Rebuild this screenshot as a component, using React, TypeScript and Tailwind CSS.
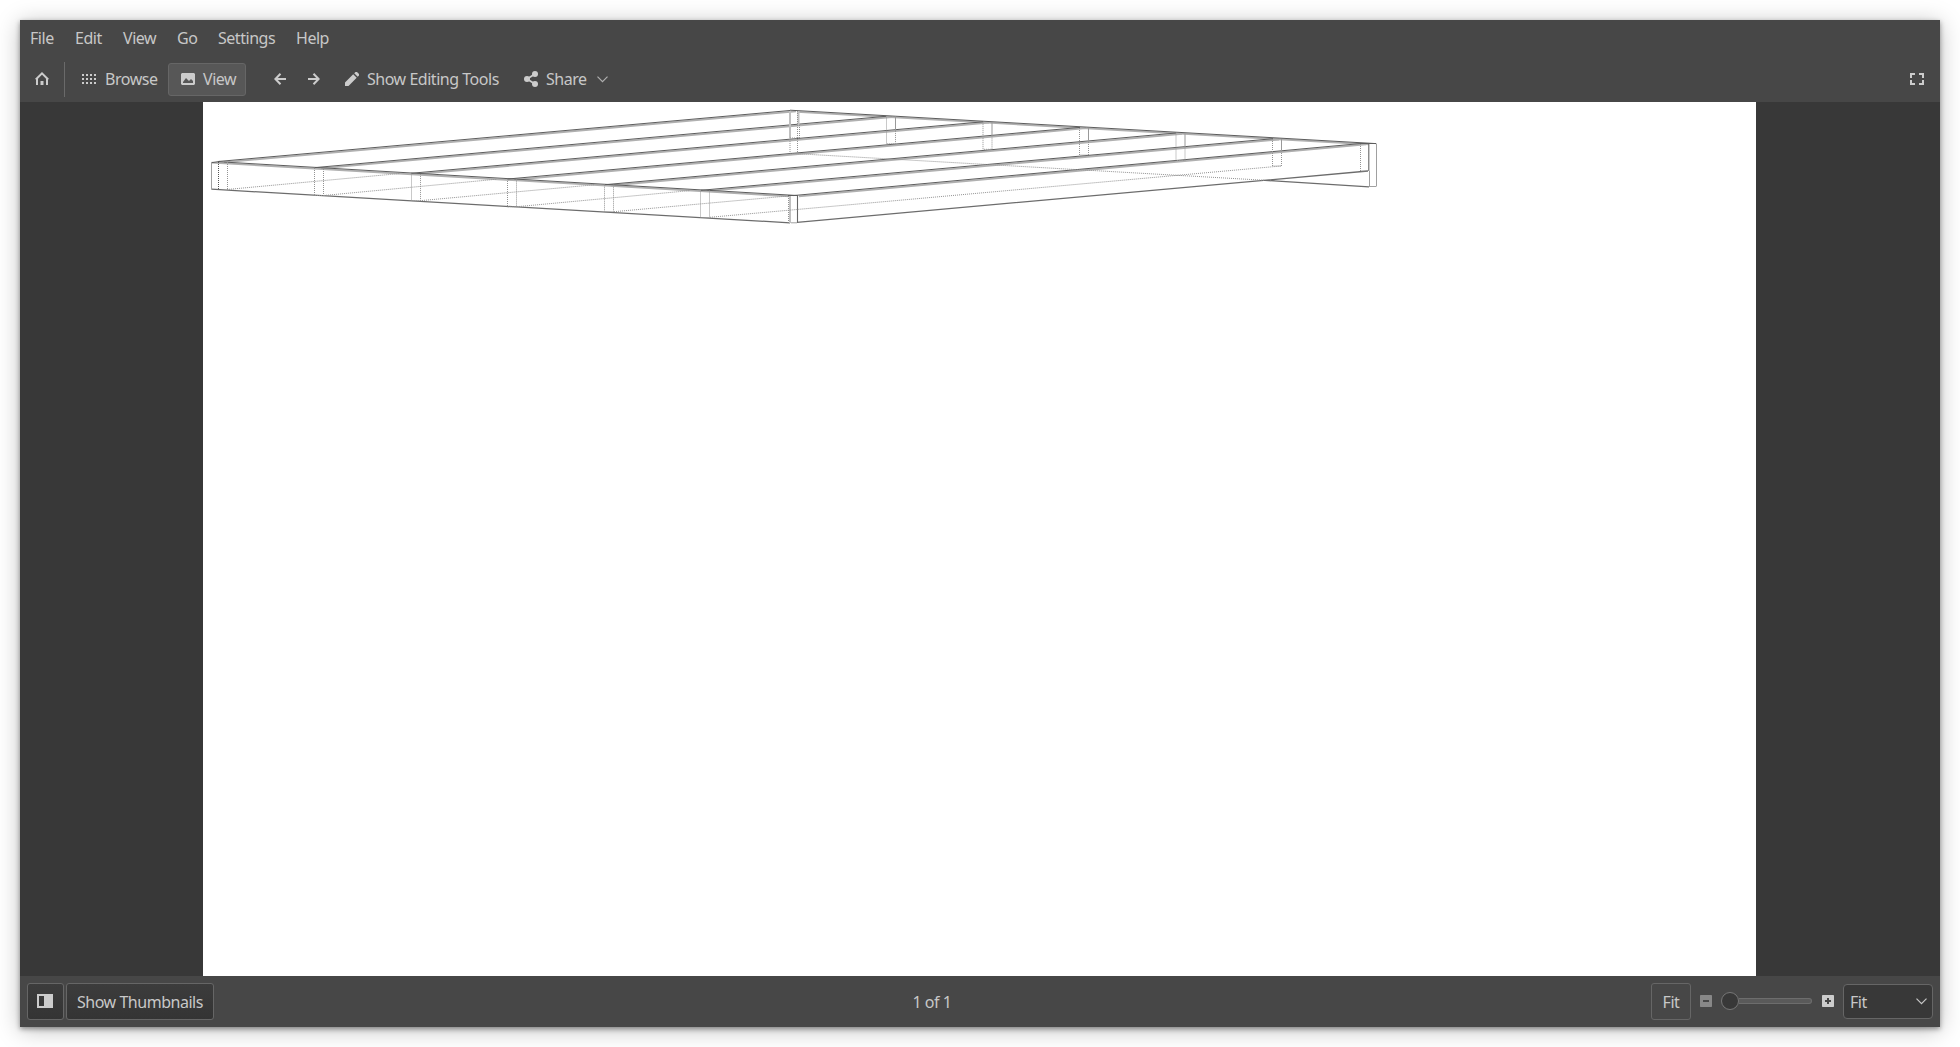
import React from "react";

const joists = [
  [218, 161.5, 790, 110.5],
  [315, 167.6, 886, 116.3],
  [411, 173.3, 983, 121.8],
  [508, 179, 1080, 127.4],
  [605, 184.7, 1176, 133],
  [701, 190.3, 1273, 138.7],
  [793, 195.6, 1360, 143.6],
];
const frontPosts = [
  [314.5, 168, 195.5],
  [411.5, 173.5, 200.7],
  [507.5, 179, 206.8],
  [604.5, 184.7, 211.7],
  [700.5, 190.5, 217.5],
];
const backPosts = [
  [886.5, 116.5, 143.7, 131],
  [983, 122.2, 149.3, 136],
  [1079.5, 128, 155, 142],
  [1176, 133.5, 160.5, 148],
  [1272.5, 139, 166, 152],
];
const hiddenBottoms = [
  [227, 189.5, 400, 173.5],
  [324, 195.5, 497, 179.2],
  [420, 200.7, 594, 184.8],
  [517, 206.7, 690, 190.6],
  [614, 211.7, 788, 196],
  [710, 217.3, 1281, 166],
];

function Wireframe() {
  return (
    <svg viewBox="203 102 1553 874" className="block h-full w-full" fill="none">
      <g stroke="#b0b0b0" strokeWidth="1.8">
        {joists.map(([a, b, c, d]) => (
          <line key={a} x1={a + 6} y1={b + 0.8} x2={c + 6} y2={d + 0.8} />
        ))}
        <path d="M211.5 162.6L790 196.4M797 111.8L1369 144.4" />
      </g>
      <g stroke="#5c5c5c" strokeWidth="1">
        {joists.map(([a, b, c, d]) => (
          <line key={a} x1={a} y1={b} x2={c} y2={d} />
        ))}
        <path d="M218 161.7L797 195.5M790 110.2L1376 143.6" />
        <path d="M211.5 162.7L220 161.4M788 195.5H798M1360 143.5H1376" />
      </g>
      <g stroke="#6c6c6c" strokeWidth="1.3">
        <path d="M211.5 189.2L790 222.8M797 222.3L1368 171M1265 180.3L1369 186.8" />
      </g>
      <path d="M797.5 195.5V222.5M1368.8 143.5V171" stroke="#666" strokeWidth="1.1" />
      <path d="M211.5 162.5V189.5M1376.5 143.5V186.5M1369.5 171V187M1369 186.5H1376M791 222.8H797" stroke="#a0a0a0" />
      <path d="M790 111V139M798.5 111V125M790 196V223" stroke="#c0c0c0" strokeWidth="2" />
      {backPosts.map(([x, t, , s]) => (
        <line key={x} x1={x + 9} x2={x + 9} y1={t} y2={s} stroke="#999" />
      ))}
      <g stroke="#939393" strokeDasharray="1 1">
        {frontPosts.map(([x, t, b]) => (
          <path key={x} d={`M${x} ${t}V${b}H${x + 9}V${t}`} />
        ))}
        {backPosts.map(([x, t, b, s]) => (
          <path key={x} d={`M${x} ${t}V${b}H${x + 9}V${s}`} />
        ))}
        {hiddenBottoms.map(([a, b, c, d]) => (
          <line key={a} x1={a} y1={b} x2={c} y2={d} />
        ))}
        <path d="M218.5 162V189M227.5 162V190M788.5 196V222M790 139V153.3L1265 180.3M797.5 111V153M799.5 125V139M790 138H799M1360.5 144V171H1368" />
        <path d="M218.5 162V189" stroke="#555" />
      </g>
    </svg>
  );
}

function ToolLabel({ children, className = "" }: { children: React.ReactNode; className?: string }) {
  return <span className={"whitespace-nowrap " + className}>{children}</span>;
}

function HomeIcon() {
  return (
    <svg width="14" height="14" viewBox="0 0 14 14" className="shrink-0">
      <path d="M.8 7.5L7 1.4L13.2 7.5M2 6.5V13M12 6.5V13" fill="none" stroke="#ccc" strokeWidth="2" />
      <path d="M5.5 9h3v4h-3z" fill="#ccc" />
    </svg>
  );
}

function GridIcon() {
  return (
    <svg width="15" height="11" viewBox="0 0 15 11" className="shrink-0" fill="#ccc">
      {[0, 4, 8, 12].map((x) => [0, 4, 8].map((y) => <rect key={`${x}-${y}`} x={x} y={y} width="2" height="2" />))}
    </svg>
  );
}

function ArrowIcon({ flip = false }: { flip?: boolean }) {
  return (
    <svg width="12" height="12" viewBox="0 0 12 12" className={flip ? "shrink-0 -scale-x-100" : "shrink-0"} fill="none" stroke="#ccc" strokeWidth="2">
      <path d="M6.5 .8L1.4 6L6.5 11.2M1.5 6H12" />
    </svg>
  );
}

function Chevron({ className = "" }: { className?: string }) {
  return (
    <svg width="11" height="7" viewBox="0 0 11 7" className={"shrink-0 " + className} fill="none" stroke="currentColor" strokeWidth="1.2">
      <path d="M.5 .7L5.5 5.7L10.5 .7" />
    </svg>
  );
}

export default function App() {
  return (
    <div className="h-[1047px] w-[1960px] overflow-hidden bg-white p-5 font-['Noto_Sans',sans-serif] text-[16px] leading-none tracking-[-0.47px] text-[#c8c8c8]">
      <div className="flex h-[1007px] w-[1920px] flex-col bg-[#474747] shadow-[0_2px_5px_rgba(0,0,0,0.4),0_3px_22px_rgba(0,0,0,0.25)]">
        <nav className="flex h-[37px] shrink-0 items-center pb-[2px] pl-[10px]">
          <span className="w-[45px]">File</span>
          <span className="w-[48px]">Edit</span>
          <span className="w-[54px]">View</span>
          <span className="w-[41px]">Go</span>
          <span className="w-[78px]">Settings</span>
          <span>Help</span>
        </nav>
        <div className="flex h-[45px] shrink-0 items-center pb-px">
          <div className="flex w-[44px] justify-center pb-px"><HomeIcon /></div>
          <div className="h-[35px] w-px bg-[#6a6a6a]" />
          <div className="ml-[17px] flex w-[86px] items-center gap-2">
            <GridIcon />
            <ToolLabel>Browse</ToolLabel>
          </div>
          <div className="flex h-[33px] w-[78px] items-center gap-2 rounded-[3px] border border-[#666] bg-[#575757] pl-3">
            <svg width="14" height="12" viewBox="0 0 14 12" className="shrink-0">
              <path fillRule="evenodd" fill="#ccc" d="M1 0h12l1 1v10l-1 1H1l-1-1V1zM2 10h10V8l-2-2-2 2-3-3-3 4z" />
            </svg>
            <ToolLabel>View</ToolLabel>
          </div>
          <div className="ml-7 flex gap-[22px]"><ArrowIcon /><ArrowIcon flip /></div>
          <svg width="14" height="14" viewBox="0 0 14 14" className="ml-[25px] shrink-0" fill="#ccc">
            <path d="M0 14V10.5L8.2 2.3L11.7 5.8L3.5 14zM9.2 1.3L10.5 0H12L14 2V3.5L12.7 4.8z" />
          </svg>
          <ToolLabel className="ml-2 w-[157px]">Show Editing Tools</ToolLabel>
          <svg width="14" height="16" viewBox="0 0 14 16" className="-mt-px shrink-0" fill="#ccc">
            <path d="M11 3L3 8L11 13" fill="none" stroke="#ccc" strokeWidth="1.8" />
            <circle cx="11" cy="3" r="3" /><circle cx="3" cy="8" r="3" /><circle cx="11" cy="13" r="3" />
          </svg>
          <ToolLabel className="ml-2 w-[52px]">Share</ToolLabel>
          <Chevron className="-ml-px text-[#b0b0b0]" />
          <svg width="14" height="12" viewBox="0 0 14 12" className="mr-4 mb-px ml-auto shrink-0" fill="none" stroke="#ccc" strokeWidth="2">
            <path d="M5 1H1V5M9 1H13V5M13 7V11H9M5 11H1V7" />
          </svg>
        </div>
        <main className="flex h-[874px] shrink-0 bg-[#383838] pl-[183px]">
          <div className="h-full w-[1553px] bg-white"><Wireframe /></div>
        </main>
        <footer className="flex h-[51px] shrink-0 items-center">
          <div className="flex w-[860px] shrink-0 gap-[2px] pl-[7px]">
            <div className="flex h-[37px] w-[37px] items-center rounded-[3px] border border-[#666] bg-linear-to-b from-[#3c3c3c] to-[#343434] pb-px pl-[9px]">
              <svg width="16" height="14" viewBox="0 0 16 14"><path fill="#ccc" fillRule="evenodd" d="M0 0h16v14H0zM2 2h5v10H2z" /></svg>
            </div>
            <div className="flex h-[37px] w-[148px] items-center justify-center rounded-[3px] border border-[#666] bg-linear-to-b from-[#3c3c3c] to-[#343434] whitespace-nowrap">Show Thumbnails</div>
          </div>
          <div className="w-[104px] text-center whitespace-nowrap">1 of 1</div>
          <div className="mr-[7px] ml-auto flex items-center">
            <div className="flex h-[37px] w-[40px] items-center justify-center rounded-[3px] border border-[#666]">Fit</div>
            <svg width="12" height="12" viewBox="0 0 12 12" className="mb-px ml-[9px]"><rect width="12" height="12" rx=".7" fill="#888" /><path d="M3 6h6" stroke="#474747" strokeWidth="2" /></svg>
            <div className="mb-px ml-[9px] flex items-center">
              <div className="h-[18px] w-[18px] shrink-0 rounded-full border border-[#777] bg-[#383838]" />
              <div className="h-[6px] w-[73px] rounded-r-full border border-l-0 border-[#6d6d6d] bg-[#5a5a5a]" />
            </div>
            <svg width="12" height="12" viewBox="0 0 12 12" className="mb-px ml-[10px]"><rect width="12" height="12" rx=".7" fill="#ccc" /><path d="M3 6h6M6 3v6" stroke="#474747" strokeWidth="2" /></svg>
            <div className="ml-[9px] flex h-[35px] w-[90px] items-center justify-between rounded-[4px] border border-[#666] bg-[#383838] pr-[5px] pl-[6px]">
              Fit
              <Chevron />
            </div>
          </div>
        </footer>
      </div>
    </div>
  );
}
